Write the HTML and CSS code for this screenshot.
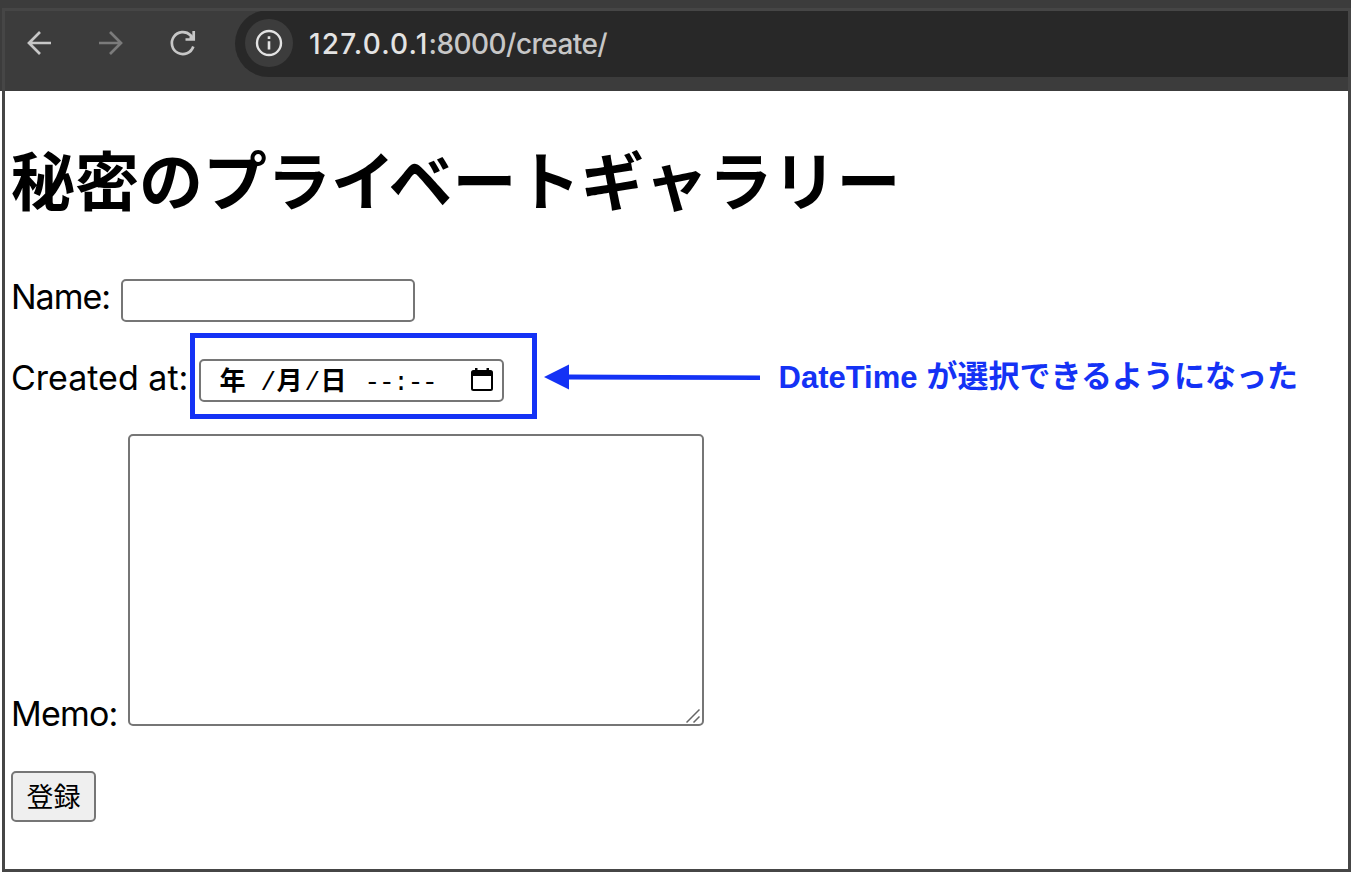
FILE: index.html
```html
<!DOCTYPE html>
<html lang="ja">
<head>
<meta charset="utf-8">
<title>秘密のプライベートギャラリー</title>
<link rel="stylesheet" href="styles.css">
</head>
<body>
<header class="toolbar">
  <svg class="nav-icons" width="235" height="66" viewBox="0 0 235 66" fill="none" stroke-width="2.7">
    <path class="nav-on" d="M51 33H29M40 22L29 33L40 44"/>
    <path class="nav-off" d="M99 33H121M110 22L121 33L110 44"/>
    <path class="nav-on" d="M193.300 36.500A11 11 0 1 1 190.500 25.200L193 28"/>
    <path class="nav-on" d="M185.500 29.500H193.700V21M189.500 27.500H193.700"/>
  </svg>
  <div class="address">
    <svg class="info" width="48" height="48" viewBox="0 0 48 48">
      <circle class="info-bg" cx="24" cy="24" r="24"/>
      <circle class="info-ring" cx="24" cy="24" r="12"/>
      <path class="info-mark" d="M24 22.3V30.5M24 17.2V20"/>
    </svg>
    <span class="url"><b class="host">127.0.0.1</b>:8000/create/</span>
  </div>
</header>
<main class="page">
  <h1 class="title">秘密のプラ<span class="tight">イ</span>ベートギャラリー</h1>
  <form class="form">
    <div class="row">
      <label class="label label-name" for="name">Name:</label>
      <input class="field" id="name" type="text">
    </div>
    <div class="row row-date">
      <span class="label label-date">Created at:</span>
      <div class="highlight">
        <div class="datetime">
          <b class="year">年</b><span class="slash">/</span><b class="month">月</b><span class="slash">/</span><b class="day">日</b><span class="time">--:--</span>
          <svg class="calendar" width="22" height="24" viewBox="0 0 22 24">
            <path d="M4 0h2.500v2h9V0H18v2h1.500Q22 2 22 4.500V20.500Q22 23 19.500 23h-17Q0 23 0 20.500V4.500Q0 2 2.500 2H4ZM2 8v12.500q0 .5.5.5h17q.5 0 .5-.5V8Z"/>
          </svg>
        </div>
      </div>
      <svg class="arrow" width="217" height="26" viewBox="0 0 217 26">
        <path d="M0 13L25 .5V10.500L216 11.500V16L25 15.500V25.500Z"/>
      </svg>
      <strong class="note"><span class="note-latin">DateTime</span>が選択できるようになった</strong>
    </div>
    <div class="row row-memo">
      <label class="label label-memo" for="memo">Memo:</label>
      <div class="memo-wrap">
        <textarea class="memo" id="memo"></textarea>
        <svg class="grip" width="14" height="14" viewBox="0 0 14 14"><path d="M.5 13.500L13.500 .5M7.500 13.500L13.500 7.500"/></svg>
      </div>
    </div>
    <button class="submit" type="button">登録</button>
  </form>
</main>
<div class="frame"></div>
</body>
</html>
```
FILE: styles.css
```css
* { box-sizing: border-box; }
body {
  margin: 0;
  width: 1351px;
  height: 874px;
  overflow: hidden;
  position: relative;
  background: #fff;
  color: #000;
  font-family: Inter, "Noto Sans CJK JP", sans-serif;
}
.toolbar {
  display: flex;
  height: 91px;
  padding: 10px 3px 14px 0;
  background: #3c3c3c;
}
.nav-icons { flex: none; }
.nav-on { stroke: #c7c7c7; }
.nav-off { stroke: #7b7b7b; }
.address {
  flex: 1;
  display: flex;
  align-items: center;
  gap: 16px;
  padding: 0 0 2px 10px;
  border-radius: 34px 0 0 34px;
  background: #282828;
}
.info-bg { fill: #3c3c3c; }
.info-ring { fill: none; stroke: #e3e3e3; stroke-width: 2.4; }
.info-mark { fill: none; stroke: #e3e3e3; stroke-width: 2.6; }
.url {
  padding-top: 2px;
  font-size: 28px;
  line-height: 40px;
  font-weight: 450;
  letter-spacing: -.55px;
  color: #c7c7c7;
  white-space: nowrap;
}
.host { font-weight: 450; letter-spacing: 1.15px; color: #e3e3e3; }
.page { padding: 33px 0 0 11px; }
.title {
  margin: 0;
  height: 106px;
  font-family: "Noto Sans CJK JP", sans-serif;
  font-size: 64px;
  line-height: 106px;
  font-weight: 700;
  white-space: nowrap;
}
.tight { letter-spacing: -6.5px; }
.form { padding-top: 49px; }
.row { display: flex; height: 43px; align-items: flex-start; }
.label {
  flex: none;
  font-size: 34px;
  line-height: 36px;
  font-weight: 400;
  white-space: nowrap;
}
.label-name { width: 110px; letter-spacing: -1px; }
.field {
  width: 294px;
  height: 43px;
  margin: 0;
  border: 2px solid #767676;
  border-radius: 5px;
}
.row-date { height: 86px; margin-top: 11px; }
.label-date { width: 178.5px; padding-top: 27px; }
.highlight {
  flex: none;
  width: 347px;
  height: 86px;
  padding: 21px 0 0 4px;
  border: 5px solid #1432f5;
}
.datetime {
  display: flex;
  align-items: center;
  width: 305px;
  height: 43px;
  padding: 4px 0 0 19px;
  border: 2px solid #767676;
  border-radius: 5px;
  font: 26px/36px "Liberation Mono", "Noto Sans CJK JP", monospace;
}
.year { width: 41px; }
.slash { width: 16px; }
.month { width: 28px; }
.day { width: 44px; }
.time { width: 106px; letter-spacing: -1.2px; }
.calendar { flex: none; margin-top: -5px; }
.arrow { flex: none; margin: 31px 18px 0 7px; fill: #1432f5; }
.note {
  display: flex;
  gap: 9px;
  padding-top: 21px;
  font: 700 31px/40px "Noto Sans CJK JP", sans-serif;
  color: #1432f5;
  white-space: nowrap;
}
.note-latin { padding-top: 4px; font-family: "Liberation Sans", sans-serif; }
.row-memo { height: 292px; margin-top: 15px; }
.label-memo { width: 117px; padding-top: 262px; letter-spacing: -.8px; }
.memo-wrap { position: relative; width: 576px; height: 292px; }
.memo {
  display: block;
  width: 100%;
  height: 100%;
  border: 2px solid #767676;
  border-radius: 5px;
  resize: none;
}
.grip { position: absolute; right: 4px; bottom: 3px; fill: none; stroke: #666; stroke-width: 1.5; }
.submit {
  display: block;
  width: 85px;
  height: 51px;
  margin-top: 45px;
  padding: 0 0 2px;
  border: 2px solid #767676;
  border-radius: 5px;
  background: #efefef;
  color: #000;
  font: 27px/44px "Noto Sans CJK JP", sans-serif;
}
.frame {
  position: absolute;
  left: 2px;
  top: 8px;
  width: 1349px;
  height: 864px;
  border: 3px solid #464646;
  pointer-events: none;
}
```
